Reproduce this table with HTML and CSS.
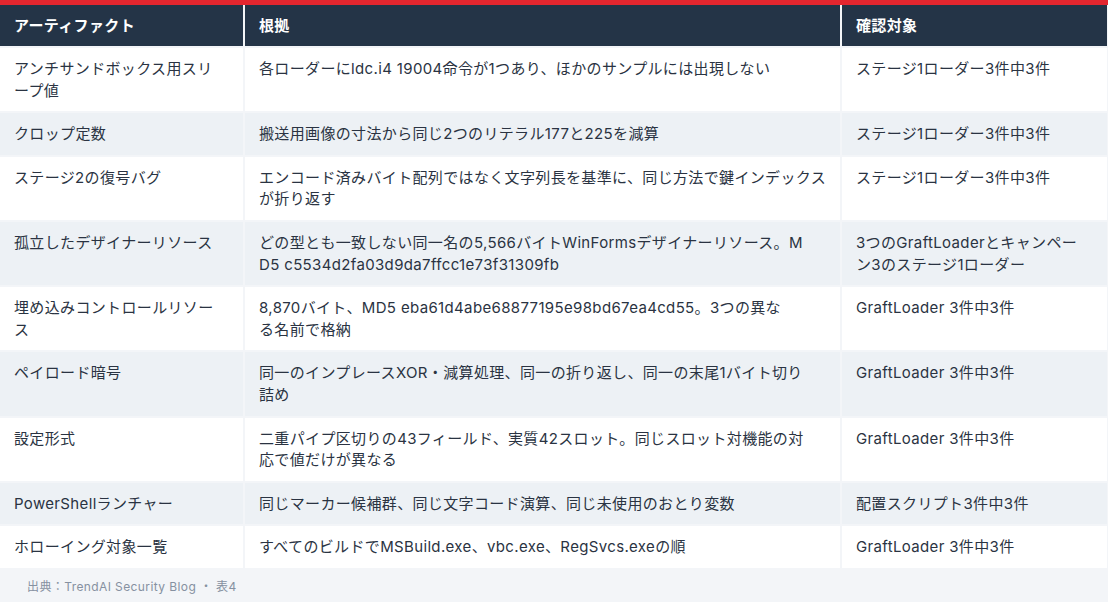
FILE: index.html
```html
<!DOCTYPE html>
<html lang="ja">
<head>
  <meta charset="UTF-8" />
  <meta name="viewport" content="width=device-width, initial-scale=1.0" />
  <title>アーティファクト比較</title>
  <link rel="stylesheet" href="styles.css">
</head>
<body>
  <div class="topbar"></div>

  <table class="evidence">
    <colgroup>
      <col class="col-artifact">
      <col class="col-basis">
      <col class="col-target">
    </colgroup>
    <thead>
      <tr>
        <th>アーティファクト</th>
        <th>根拠</th>
        <th>確認対象</th>
      </tr>
    </thead>
    <tbody>
      <tr>
        <td>アンチサンドボックス用スリ<br>ープ値</td>
        <td>各ローダーにldc.i4 19004命令が1つあり、ほかのサンプルには出現しない</td>
        <td>ステージ1ローダー3件中3件</td>
      </tr>
      <tr>
        <td>クロップ定数</td>
        <td>搬送用画像の寸法から同じ2つのリテラル177と225を減算</td>
        <td>ステージ1ローダー3件中3件</td>
      </tr>
      <tr>
        <td>ステージ2の復号バグ</td>
        <td>エンコード済みバイト配列ではなく文字列長を基準に、同じ方法で鍵インデックス<br>が折り返す</td>
        <td>ステージ1ローダー3件中3件</td>
      </tr>
      <tr>
        <td>孤立したデザイナーリソース</td>
        <td>どの型とも一致しない同一名の5,566バイトWinFormsデザイナーリソース。M<br>D5 c5534d2fa03d9da7ffcc1e73f31309fb</td>
        <td>3つのGraftLoaderとキャンペー<br>ン3のステージ1ローダー</td>
      </tr>
      <tr>
        <td>埋め込みコントロールリソー<br>ス</td>
        <td>8,870バイト、MD5 eba61d4abe68877195e98bd67ea4cd55。3つの異な<br>る名前で格納</td>
        <td>GraftLoader 3件中3件</td>
      </tr>
      <tr>
        <td>ペイロード暗号</td>
        <td>同一のインプレースXOR・減算処理、同一の折り返し、同一の末尾1バイト切り<br>詰め</td>
        <td>GraftLoader 3件中3件</td>
      </tr>
      <tr>
        <td>設定形式</td>
        <td>二重パイプ区切りの43フィールド、実質42スロット。同じスロット対機能の対<br>応で値だけが異なる</td>
        <td>GraftLoader 3件中3件</td>
      </tr>
      <tr>
        <td>PowerShellランチャー</td>
        <td>同じマーカー候補群、同じ文字コード演算、同じ未使用のおとり変数</td>
        <td>配置スクリプト3件中3件</td>
      </tr>
      <tr>
        <td>ホローイング対象一覧</td>
        <td>すべてのビルドでMSBuild.exe、vbc.exe、RegSvcs.exeの順</td>
        <td>GraftLoader 3件中3件</td>
      </tr>
    </tbody>
  </table>

  <p class="source">出典：TrendAI Security Blog ・ 表4</p>
</body>
</html>
```

FILE: styles.css
```css
body {
  margin: 0;
  font-family: Inter, "Noto Sans CJK JP", sans-serif;
  background-color: #f3f5f8;
  color: #2a3342;
}

.topbar {
  height: 5px;
  background-color: #e4262f;
}

.evidence {
  width: 1108px;
  table-layout: fixed;
  border-collapse: collapse;
  font-size: 15px;
  line-height: 21.6px;
  letter-spacing: 0.35px;
}

.col-artifact {
  width: 244px;
}

.col-basis {
  width: 597px;
}

.col-target {
  width: 267px;
}

.evidence th,
.evidence td {
  text-align: left;
  vertical-align: top;
  padding: 10px 13px 10px 14px;
  border: 2px solid #f3f5f8;
}

.evidence th:first-child,
.evidence td:first-child {
  border-left: none;
}

.evidence th {
  background-color: #243447;
  color: white;
  font-weight: bold;
  line-height: 22px;
  padding: 10px 14px 9px;
  border-top: none;
}

.evidence td {
  background-color: white;
}

.evidence tbody tr:nth-child(even) td {
  background-color: #edf1f5;
}

.source {
  margin: 0;
  padding: 7px 27px;
  font-size: 12px;
  letter-spacing: 0.4px;
  color: #8691a1;
}
```
